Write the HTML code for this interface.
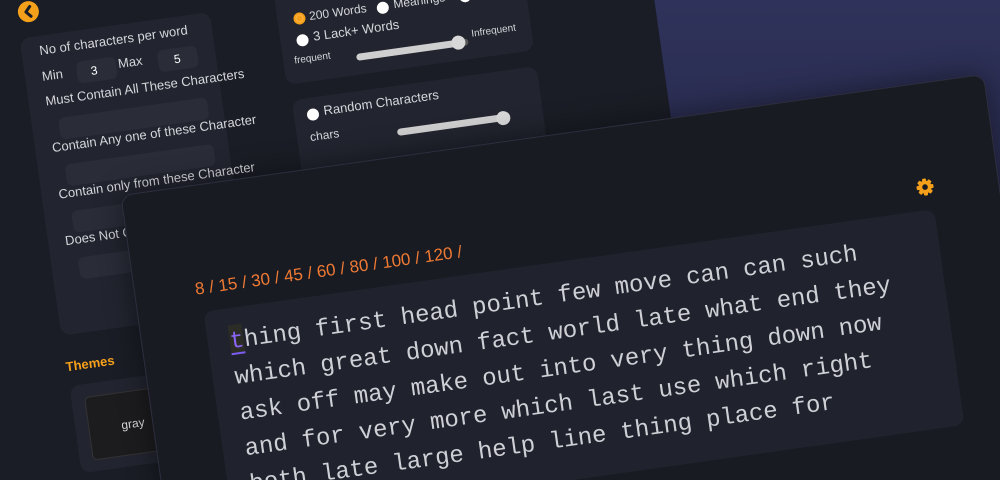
<!DOCTYPE html>
<html><head><meta charset="utf-8"><style>
html,body{margin:0;padding:0;width:1000px;height:480px;overflow:hidden;background:#2c2f55;font-family:"Liberation Sans",sans-serif}
.wrap{position:relative;width:1000px;height:480px;overflow:hidden}
.bgg{position:absolute;left:0;top:0;width:1000px;height:480px;background:linear-gradient(180deg,#2f325a 0%,#262848 60%,#1d1f30 100%)}
.f{position:absolute;left:0;top:0;width:1px;height:1px;transform-origin:0 0;transform:rotate(-8deg)}
.a{position:absolute}
.back{left:-300px;top:-300px;width:948px;height:1100px;background:#1b1d26;border-radius:0 12px 0 0}
.card{background:#22242f;border-radius:10px}
.lbl{color:#d6d7db;font-size:13px;white-space:nowrap}
.inp{background:#2a2c38;border-radius:6px}
.rad{width:12px;height:12px;border-radius:50%;background:#fff}
.front{left:92px;top:210px;width:870px;height:600px;background:#191b22;border-radius:12px;box-shadow:0 0 30px rgba(0,0,0,.45);border:1px solid #2c2e3e}
.mono{font-family:"Liberation Mono",monospace;font-size:24px;color:#cfd0d6;white-space:nowrap}
</style></head><body>
<div class="wrap">
<div class="bgg"></div>
<div class="f">
  <div class="a back"></div>
  <div class="a" style="left:16px;top:5px;width:21px;height:21px;border-radius:50%;background:#f5a01a"></div>
  <svg class="a" style="left:16px;top:5px" width="21" height="21"><path d="M12.5 5.5 L8 10.5 L12.5 15.5" stroke="#1b1d26" stroke-width="3" fill="none" stroke-linecap="round" stroke-linejoin="round"/></svg>

  <div class="a card" style="left:14px;top:41px;width:192px;height:300px"></div>
  <div class="a lbl" style="left:32px;top:48px">No of characters per word</div>
  <div class="a lbl" style="left:31px;top:74px">Min</div>
  <div class="a inp" style="left:66px;top:72px;width:40px;height:22px"></div>
  <div class="a lbl" style="left:80px;top:76px;color:#fff;font-size:12px">3</div>
  <div class="a lbl" style="left:108px;top:72px">Max</div>
  <div class="a inp" style="left:148px;top:72px;width:40px;height:22px"></div>
  <div class="a lbl" style="left:164px;top:76px;color:#fff;font-size:12px">5</div>
  <div class="a lbl" style="left:31px;top:99px">Must Contain All These Characters</div>
  <div class="a inp" style="left:41px;top:125px;width:150px;height:22px"></div>
  <div class="a lbl" style="left:31px;top:146px">Contain Any one of these Character</div>
  <div class="a inp" style="left:41px;top:172px;width:150px;height:22px"></div>
  <div class="a lbl" style="left:31px;top:193px">Contain only from these Character</div>
  <div class="a inp" style="left:41px;top:219px;width:150px;height:22px"></div>
  <div class="a lbl" style="left:31px;top:240px">Does Not Contain</div>
  <div class="a inp" style="left:41px;top:266px;width:150px;height:22px"></div>

  <div class="a" style="left:14px;top:365px;color:#f5a01a;font-weight:bold;font-size:13px">Themes</div>
  <div class="a card" style="left:15px;top:392px;width:200px;height:88px"></div>
  <div class="a" style="left:28px;top:405px;width:160px;height:62px;background:#1c1c1f;border-radius:5px;border:1px solid #333"></div>
  <div class="a lbl" style="left:61px;top:431px;font-size:12px">gray</div>

  <div class="a card" style="left:272px;top:0px;width:250px;height:124px"></div>
  <div class="a" style="left:288px;top:54px;width:8px;height:8px;border-radius:50%;background:#f5a01a;border:2px solid #f5a01a;box-shadow:0 0 0 1px #ffb54a inset"></div>
  <div class="a lbl" style="left:304px;top:52px;font-size:12px">200 Words</div>
  <div class="a rad" style="left:372px;top:55px"></div>
  <div class="a lbl" style="left:389px;top:52px;font-size:12px">Meanings</div>
  <div class="a rad" style="left:455px;top:55px"></div>
  <div class="a rad" style="left:288px;top:76px"></div>
  <div class="a lbl" style="left:305px;top:72px">3 Lack+ Words</div>
  <div class="a lbl" style="left:283px;top:96px;font-size:10px">frequent</div>
  <div class="a" style="left:345px;top:103px;width:113px;height:7px;border-radius:4px;background:#555"></div>
  <div class="a" style="left:345px;top:103px;width:104px;height:7px;border-radius:4px;background:#cfcfd0"></div>
  <div class="a" style="left:441px;top:99px;width:14px;height:14px;border-radius:50%;background:#d8d8d8"></div>
  <div class="a lbl" style="left:462px;top:94px;font-size:10px">Infrequent</div>

  <div class="a card" style="left:275px;top:140px;width:247px;height:100px"></div>
  <div class="a rad" style="left:288px;top:151px"></div>
  <div class="a lbl" style="left:305px;top:147px">Random Characters</div>
  <div class="a lbl" style="left:288px;top:172px;font-size:12px">chars</div>
  <div class="a" style="left:375px;top:183px;width:110px;height:7px;border-radius:4px;background:#cfcfd0"></div>
  <div class="a" style="left:475px;top:180px;width:14px;height:14px;border-radius:50%;background:#d8d8d8"></div>

  <div class="a front"></div>
  <svg class="a" style="left:880px;top:304px" width="20" height="20" viewBox="0 0 20 20"><g fill="#f5a01a"><circle cx="10" cy="10" r="6.5"/><rect x="8" y="1.5" width="4" height="17" rx="1"/><rect x="1.5" y="8" width="17" height="4" rx="1"/><rect x="8" y="1.5" width="4" height="17" rx="1" transform="rotate(45 10 10)"/><rect x="8" y="1.5" width="4" height="17" rx="1" transform="rotate(-45 10 10)"/></g><circle cx="10" cy="10" r="2.8" fill="#191b22"/></svg>
  <div class="a" style="left:153px;top:304px;color:#f07a34;font-size:17px;white-space:nowrap">8 / 15 / 30 / 45 / 60 / 80 / 100 / 120 /</div>
  <div class="a" style="left:158px;top:337px;width:738px;height:218px;background:#20222d;border-radius:10px"></div>
  <div class="a" style="left:180px;top:354px;width:14px;height:30px;background:#2a2c25"></div>
  <div class="a" style="left:180px;top:382px;width:14px;height:2px;background:#7a5cf0"></div>
  <div class="a mono" style="left:180px;top:354px;line-height:36px"><span style="color:#8a64f2">t</span>hing first head point few move can can such<br>which great down fact world late what end they<br>ask off may make out into very thing down now<br>and for very more which last use which right<br>both late large help line thing place for</div>
</div>
</div>
</body></html>
